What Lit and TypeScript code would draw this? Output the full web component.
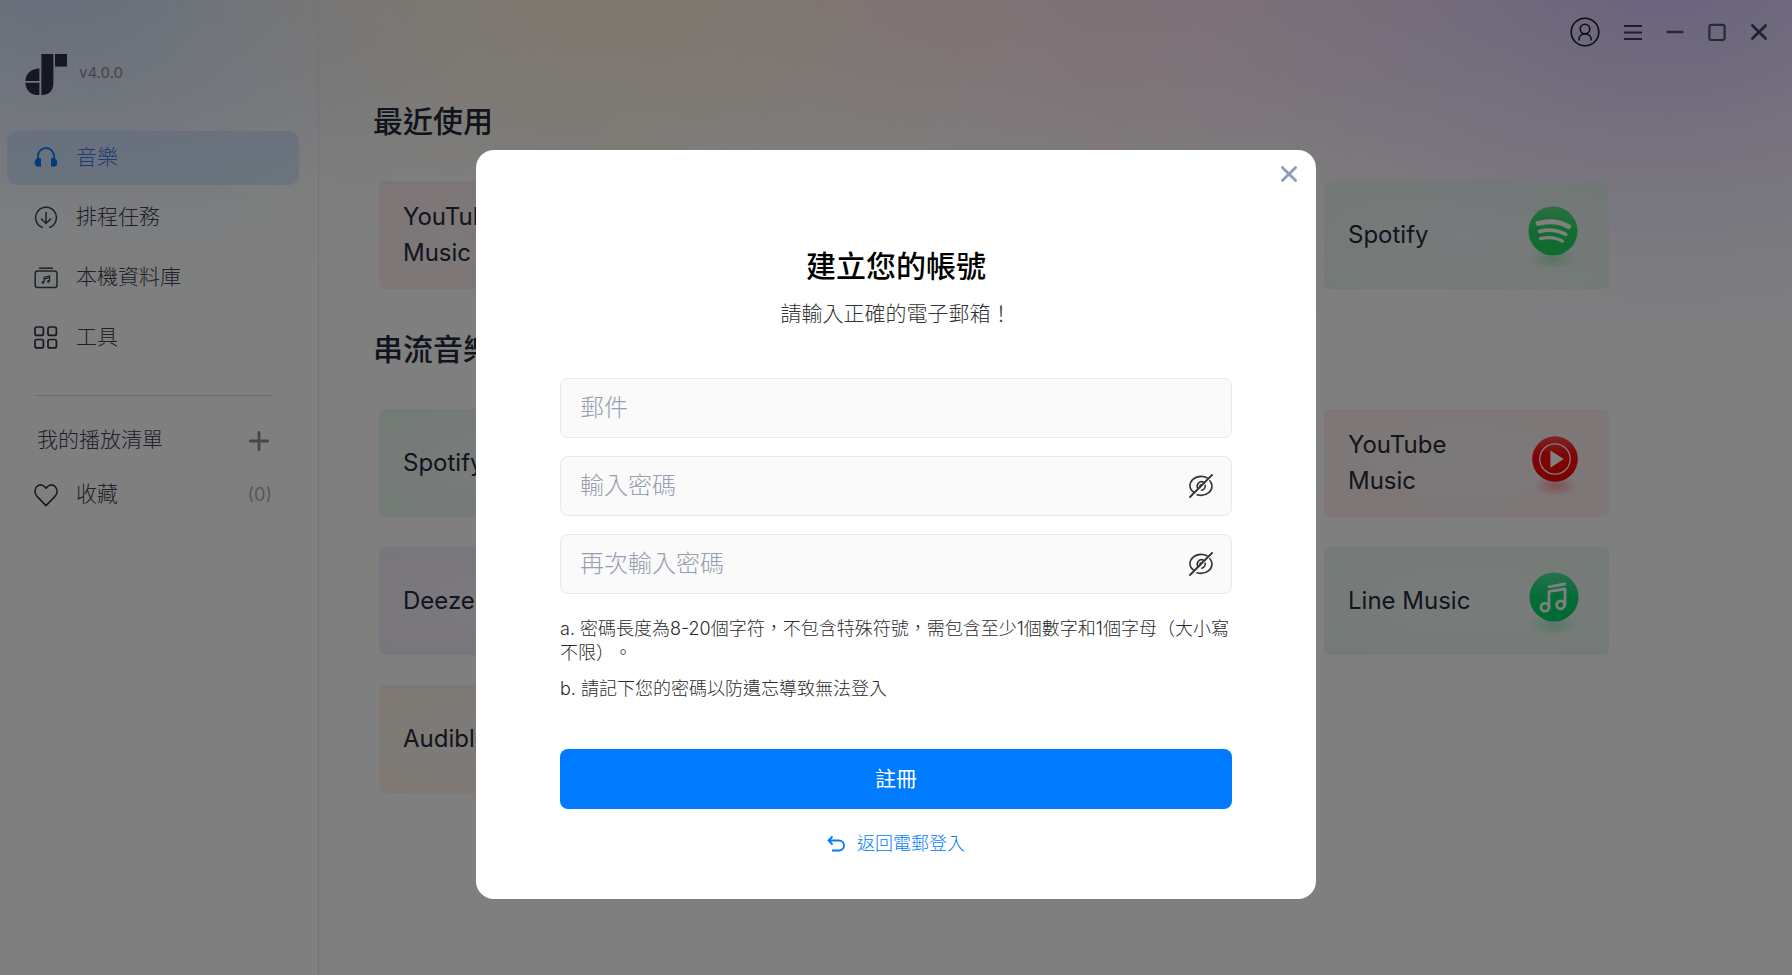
import { LitElement, html, css, nothing, type TemplateResult } from "lit";
import { customElement, property, state } from "lit/decorators.js";
import { classMap } from "lit/directives/class-map.js";

const icons = {
  logo: html`<svg width="42" height="41" viewBox="0 0 42 41" fill="#2a3040" aria-hidden="true">
    <path d="M16.4 0H28.4V29C28.4 36.5 24.4 41 16.4 41Z" />
    <path d="M30 0H42V12.6H30Z" />
    <path d="M14.4 14.6V27H0.3C0.8 19.6 6.2 14.6 14.4 14.6Z" />
    <path d="M14.4 28.8V41H12C5.4 41 0.9 36 0.3 28.8Z" />
  </svg>`,
  music: html`<svg width="24" height="24" viewBox="0 0 24 24" fill="none" aria-hidden="true">
    <path d="M4 14V10a8 8 0 0 1 16 0V14" stroke="#007bff" stroke-width="1.8" />
    <path d="M7 12H4.600A4.500 4.500 0 0 0 4 20.800H7ZM17 12h2.400a4.500 4.500 0 0 1 .6 8.800H17Z" fill="#007bff" />
  </svg>`,
  schedule: html`<svg width="24" height="24" viewBox="0 0 24 24" fill="none" stroke="#3a4252" stroke-width="1.5" aria-hidden="true">
    <path d="M9 21.600A10.400 10.400 0 1 1 15 21.600" />
    <path d="M12 6V17.500M7 12.500l5 5 5-5" />
  </svg>`,
  library: html`<svg width="24" height="24" viewBox="0 0 24 24" fill="none" stroke="#3a4252" stroke-width="1.5" aria-hidden="true">
    <rect x="1.2" y="5" width="21.8" height="16.6" rx="2.6" />
    <path d="M5 2.2H19" />
    <path d="M10.2 16V11.2L15.6 10V15M10.4 12.8l5-1.1" stroke-width="1.2" />
    <circle cx="9" cy="16.4" r="1.3" fill="#3a4252" stroke="none" />
    <circle cx="14.4" cy="15.4" r="1.3" fill="#3a4252" stroke="none" />
  </svg>`,
  tools: html`<svg width="24" height="24" viewBox="0 0 24 24" fill="none" stroke="#2c3444" stroke-width="1.7" aria-hidden="true">
    <rect x="1" y="1" width="8.4" height="8.4" rx="2" />
    <rect x="14" y="1" width="8.4" height="8.4" rx="2" />
    <rect x="1" y="13.5" width="8.4" height="8.4" rx="2" />
    <rect x="14" y="13.5" width="8.4" height="8.4" rx="2" />
  </svg>`,
  heart: html`<svg width="24" height="24" viewBox="0 0 24 24" fill="none" stroke="#2c3444" stroke-width="1.6" stroke-linejoin="round" aria-hidden="true">
    <path d="M12 22.6 3.2 13.6C.2 10.5.2 6 2.9 3.5 5.6 1 9.6 1.4 12 5.2 14.4 1.4 18.4 1 21.1 3.5 23.8 6 23.8 10.5 20.8 13.6Z" />
  </svg>`,
  plus: html`<svg width="20" height="20" viewBox="0 0 20 20" stroke="#8c8c8c" stroke-width="2.8" stroke-linecap="round" aria-hidden="true">
    <path d="M10 1.4V18.6M1.4 10H18.6" />
  </svg>`,
  user: html`<svg width="30" height="30" viewBox="0 0 30 30" fill="none" stroke="#161a2a" stroke-width="1.6" aria-hidden="true">
    <circle cx="15" cy="15" r="13.8" />
    <circle cx="15" cy="12" r="4.8" />
    <path d="M8.8 23.6C8.8 19.4 11.4 16.8 15 16.8S21.4 19.4 21.4 23.6" />
  </svg>`,
  menu: html`<svg width="18" height="16" viewBox="0 0 18 16" stroke="#3c3c52" stroke-width="2" aria-hidden="true">
    <path d="M0 2H18M0 8.5H18M0 15H18" />
  </svg>`,
  minimize: html`<svg width="18" height="18" viewBox="0 0 18 18" stroke="#4a546c" stroke-width="2.4" stroke-linecap="round" aria-hidden="true">
    <path d="M1.5 9H16.5" />
  </svg>`,
  maximize: html`<svg width="18" height="18" viewBox="0 0 18 18" fill="none" stroke="#4a546c" stroke-width="2.2" aria-hidden="true">
    <rect x="1.4" y="1.8" width="15.2" height="15.2" rx="2" />
  </svg>`,
  close: html`<svg width="18" height="18" viewBox="0 0 18 18" fill="none" stroke="currentColor" stroke-width="2.8" stroke-linecap="round" aria-hidden="true">
    <path d="M2.4 2.4 15.6 15.6M15.6 2.4 2.4 15.6" />
  </svg>`,
  eyeOff: html`<svg width="24" height="24" viewBox="0 0 24 24" fill="none" stroke="#333" stroke-width="1.6" stroke-linecap="round" aria-hidden="true">
    <path d="M4.8 18.2C2.4 16.6 1 14.4 1 12 1 6.6 5.8 2.4 12 2.4c2.400 0 4.400.5 6 1.400" />
    <path d="M20.800 6.800C22.200 8.200 23 10 23 12c0 5.200-4.900 9.400-11 9.400-1.400 0-2.700-.2-3.900-.6" />
    <path d="M9 14.600A4.400 4.400 0 0 1 14.600 8.200M16.200 11.200A4.400 4.400 0 0 1 12.800 16.200" />
    <path d="M11 13a1.600 1.600 0 0 1 1.600-2.200" />
    <path d="M1 23 23 1" stroke-width="1.8" />
  </svg>`,
  back: html`<svg width="18" height="18" viewBox="0 0 18 18" fill="none" stroke="#007bff" stroke-width="1.8" aria-hidden="true">
    <path d="M5.5 1.5 1.5 5.5 5.5 9.5M1.5 5.5H12A5 5 0 0 1 12 15.5H5" />
  </svg>`,
};

type Brand = "youtube" | "spotify" | "line" | "deezer" | "audible";

const brandIcon = (brand: Brand): TemplateResult | typeof nothing => {
  if (brand === "spotify") {
    return html`<svg width="56" height="64" viewBox="0 0 56 64" aria-hidden="true">
      <defs>
        <linearGradient id="sp" x1="0" y1="0" x2="0" y2="1">
          <stop offset="0" stop-color="#55dc86" /><stop offset="0.5" stop-color="#25d95f" /><stop offset="1" stop-color="#22d65b" />
        </linearGradient>
        <radialGradient id="sps"><stop offset="0" stop-color="#22d65b" stop-opacity=".3" /><stop offset="1" stop-color="#22d65b" stop-opacity="0" /></radialGradient>
      </defs>
      <ellipse cx="28" cy="56" rx="25" ry="12" fill="url(#sps)" />
      <circle cx="28" cy="28" r="24.5" fill="url(#sp)" />
      <g fill="none" stroke="#fff" stroke-linecap="round">
        <path d="M13.2 20.4C24 17.6 35 18.8 43.6 23.6" stroke-width="5" />
        <path d="M14.6 28.4C24 26 33 27.2 40.6 31.4" stroke-width="3.8" />
        <path d="M15.6 35.6C23 34 30.8 34.6 37.4 38.2" stroke-width="3.2" />
      </g>
    </svg>`;
  }
  if (brand === "youtube") {
    return html`<svg width="56" height="64" viewBox="0 0 56 64" aria-hidden="true">
      <defs>
        <linearGradient id="yt" x1="0" y1="0" x2="0" y2="1">
          <stop offset="0" stop-color="#ff4a4a" /><stop offset="0.4" stop-color="#ff0a0a" /><stop offset="1" stop-color="#f60000" />
        </linearGradient>
        <radialGradient id="yts"><stop offset="0" stop-color="#f00" stop-opacity=".3" /><stop offset="1" stop-color="#f00" stop-opacity="0" /></radialGradient>
      </defs>
      <ellipse cx="30" cy="55" rx="22" ry="11" fill="url(#yts)" />
      <circle cx="30" cy="28" r="22.8" fill="url(#yt)" />
      <circle cx="30" cy="28" r="15.2" fill="none" stroke="#fff" stroke-width="1.3" />
      <path d="M25.4 19.4 38.8 28 25.4 36.8Z" fill="#fff" />
    </svg>`;
  }
  if (brand === "line") {
    return html`<svg width="56" height="64" viewBox="0 0 56 64" aria-hidden="true">
      <defs>
        <linearGradient id="ln" x1="0" y1="0" x2="0" y2="1">
          <stop offset="0" stop-color="#50e3a0" /><stop offset="0.5" stop-color="#08d970" /><stop offset="1" stop-color="#00d468" />
        </linearGradient>
        <radialGradient id="lns"><stop offset="0" stop-color="#00d468" stop-opacity=".25" /><stop offset="1" stop-color="#00d468" stop-opacity="0" /></radialGradient>
      </defs>
      <ellipse cx="29" cy="56" rx="25" ry="12" fill="url(#lns)" />
      <circle cx="29" cy="28" r="24.5" fill="url(#ln)" />
      <g fill="none" stroke="#fff" stroke-width="2.8" stroke-linecap="round" stroke-linejoin="round">
        <path d="M24 38V22.4L40 20V36" />
        <path d="M24 17.8 39.8 15" />
        <circle cx="20" cy="38.2" r="4" />
        <circle cx="35.6" cy="35.8" r="4" />
      </g>
    </svg>`;
  }
  return nothing;
};

interface Service {
  name: string;
  brand: Brand;
  tint: string;
  last?: boolean;
}

const recent: Service[] = [
  { name: "YouTube Music", brand: "youtube", tint: "red" },
  { name: "Spotify", brand: "spotify", tint: "green", last: true },
];

const streaming: Service[] = [
  { name: "Spotify", brand: "spotify", tint: "green" },
  { name: "YouTube Music", brand: "youtube", tint: "red", last: true },
  { name: "Deezer", brand: "deezer", tint: "purple" },
  { name: "Line Music", brand: "line", tint: "green", last: true },
  { name: "Audible", brand: "audible", tint: "amber" },
];

const base = css`
  * {
    box-sizing: border-box;
  }
  button,
  input {
    font: inherit;
    color: inherit;
    border: 0;
    background: none;
    padding: 0;
    margin: 0;
  }
  button {
    cursor: pointer;
  }
  a {
    color: inherit;
    text-decoration: none;
  }
  h1,
  h2,
  p {
    margin: 0;
  }
  svg {
    display: block;
    flex: none;
  }
`;

@customElement("side-bar")
export class SideBar extends LitElement {
  static styles = [
    base,
    css`
      :host {
        display: flex;
        flex-direction: column;
        width: 319px;
        flex: none;
        border-right: 1px solid #e4e4e6;
        font-size: 21px;
        font-weight: 300;
        line-height: 30px;
        color: #3a4252;
      }
      .brand {
        display: flex;
        align-items: flex-start;
        gap: 12px;
        padding: 54px 25px 36px;
      }
      .version {
        font-size: 15px;
        font-weight: 400;
        line-height: 38px;
        height: 41px;
        color: #868a96;
      }
      .nav {
        display: flex;
        flex-direction: column;
        gap: 6px;
        padding: 0 19px 0 7px;
      }
      .item {
        display: flex;
        align-items: center;
        gap: 18px;
        height: 54px;
        padding: 0 27px;
        border-radius: 10px;
      }
      .label {
        padding-bottom: 2px;
      }
      .active {
        background: rgba(182, 214, 250, 0.5);
        color: #3f76ee;
      }
      .rule {
        height: 1px;
        margin: 30px 46px 0 34px;
        background: #dcdcde;
      }
      .heading {
        display: flex;
        align-items: center;
        justify-content: space-between;
        padding: 29px 49px 0 37px;
      }
      .favourites {
        display: flex;
        align-items: center;
        gap: 18px;
        padding: 22px 46px 0 34px;
      }
      .count {
        margin-left: auto;
        font-size: 18px;
        font-weight: 400;
        color: #b0b0b4;
      }
    `,
  ];

  @state() private current = "音樂";

  private items = [
    { label: "音樂", icon: icons.music },
    { label: "排程任務", icon: icons.schedule },
    { label: "本機資料庫", icon: icons.library },
    { label: "工具", icon: icons.tools },
  ];

  render() {
    return html`
      <div class="brand">${icons.logo}<span class="version">v4.0.0</span></div>
      <nav class="nav">
        ${this.items.map(
          (item) => html`<a
            href="#"
            class=${classMap({ item: true, active: item.label === this.current })}
            @click=${() => (this.current = item.label)}
            >${item.icon}<span class="label">${item.label}</span></a
          >`
        )}
      </nav>
      <div class="rule"></div>
      <div class="heading">
        <span class="label">我的播放清單</span>
        <button aria-label="+">${icons.plus}</button>
      </div>
      <a class="favourites" href="#">${icons.heart}<span class="label">收藏</span><span class="count">(0)</span></a>
    `;
  }
}

@customElement("service-grid")
export class ServiceGrid extends LitElement {
  static styles = [
    base,
    css`
      :host {
        display: block;
      }
      .title {
        font-size: 30px;
        font-weight: 500;
        line-height: 44px;
        color: #222838;
      }
      .grid {
        display: grid;
        grid-template-columns: repeat(auto-fill, 285px);
        gap: 30px;
        padding: 38px 6px 0;
      }
      .card {
        display: flex;
        align-items: center;
        justify-content: space-between;
        height: 108px;
        padding: 0 28px 0 24px;
        border-radius: 6px;
        font-size: 24px;
        line-height: 36px;
        text-align: left;
        color: #242a3c;
      }
      .last {
        grid-column: -2;
      }
      .name {
        max-width: 140px;
      }
      .red {
        background: radial-gradient(ellipse at 50% 50%, rgba(242, 236, 240, 0.6), rgba(255, 216, 218, 0.5));
      }
      .green {
        background: radial-gradient(ellipse at 50% 50%, rgba(234, 242, 242, 0.6), rgba(216, 240, 224, 0.6));
      }
      .purple {
        background: radial-gradient(ellipse at 50% 50%, rgba(248, 240, 246, 0.6), rgba(230, 222, 246, 0.6));
      }
      .amber {
        background: radial-gradient(ellipse at 50% 50%, rgba(248, 242, 240, 0.6), rgba(250, 232, 212, 0.6));
      }
    `,
  ];

  @property() heading = "";
  @property({ attribute: false }) services: Service[] = [];

  render() {
    return html`
      <h2 class="title">${this.heading}</h2>
      <div class="grid">
        ${this.services.map(
          (s) => html`<button class=${classMap({ card: true, [s.tint]: true, last: !!s.last })}>
            <span class="name">${s.name}</span>${brandIcon(s.brand)}
          </button>`
        )}
      </div>
    `;
  }
}

@customElement("sign-up-dialog")
export class SignUpDialog extends LitElement {
  static styles = [
    base,
    css`
      :host {
        display: block;
        position: relative;
        width: 840px;
        max-width: 100%;
        padding: 94px 84px 40px;
        border-radius: 18px;
        background: #fff;
        color: #333;
      }
      .close {
        position: absolute;
        top: 15px;
        right: 18px;
        color: #8f9bbb;
      }
      .title {
        font-size: 30px;
        font-weight: 500;
        line-height: 44px;
        text-align: center;
        color: #000;
      }
      .subtitle {
        margin-top: 11px;
        font-size: 21px;
        font-weight: 300;
        line-height: 30px;
        text-align: center;
      }
      .form {
        display: flex;
        flex-direction: column;
        gap: 18px;
        margin-top: 49px;
      }
      .field {
        display: flex;
        align-items: center;
        height: 60px;
        padding: 0 18px 0 19px;
        border: 1px solid #e8e8e8;
        border-radius: 8px;
        background: #fafafa;
      }
      .input {
        flex: 1;
        min-width: 0;
        height: 36px;
        outline: 0;
        font-size: 24px;
        font-weight: 300;
        line-height: 36px;
      }
      .input::placeholder {
        color: #969eb0;
        opacity: 1;
      }
      .rules {
        display: flex;
        flex-direction: column;
        gap: 12px;
        padding: 5px 0 30px;
        font-size: 18px;
        font-weight: 300;
        line-height: 24px;
        color: #2a2a2a;
        text-spacing-trim: space-all;
      }
      .submit {
        height: 60px;
        border-radius: 8px;
        background: #007bff;
        color: #fff;
        font-size: 21px;
        font-weight: 400;
        line-height: 30px;
      }
      .back {
        display: flex;
        align-items: center;
        justify-content: center;
        gap: 12px;
        margin-top: 20px;
        font-size: 18px;
        font-weight: 300;
        line-height: 30px;
        color: #007bff;
      }
    `,
  ];

  private passwordField(label: string) {
    return html`<div class="field">
      <input class="input" type="password" placeholder=${label} aria-label=${label} />
      <button type="button" aria-label=${label}>${icons.eyeOff}</button>
    </div>`;
  }

  render() {
    return html`
      <button class="close" aria-label="×">${icons.close}</button>
      <h1 class="title">建立您的帳號</h1>
      <p class="subtitle">請輸入正確的電子郵箱！</p>
      <form class="form" @submit=${(e: Event) => e.preventDefault()}>
        <div class="field">
          <input class="input" type="email" placeholder="郵件" aria-label="郵件" />
        </div>
        ${this.passwordField("輸入密碼")} ${this.passwordField("再次輸入密碼")}
        <div class="rules">
          <p>a. 密碼長度為8-20個字符，不包含特殊符號，需包含至少1個數字和1個字母（大小寫不限）。</p>
          <p>b. 請記下您的密碼以防遺忘導致無法登入</p>
        </div>
        <button class="submit">註冊</button>
      </form>
      <a class="back" href="#">${icons.back}<span>返回電郵登入</span></a>
    `;
  }
}

@customElement("app-root")
export class AppRoot extends LitElement {
  static styles = [
    base,
    css`
      :host {
        display: block;
        font-family: Inter, "Noto Sans CJK TC", sans-serif;
      }
      .app {
        position: relative;
      }
      .page {
        display: flex;
        min-height: 100vh;
        background:
          radial-gradient(ellipse 680px 440px at 93% -3%, rgba(184, 158, 250, 0.62), rgba(210, 192, 250, 0.42) 40%, rgba(232, 224, 252, 0.2) 70%, transparent),
          radial-gradient(ellipse 600px 320px at 64% -3%, rgba(255, 196, 214, 0.56), rgba(255, 208, 222, 0.4) 40%, rgba(255, 232, 238, 0.16) 70%, transparent),
          radial-gradient(ellipse 600px 320px at 35% -3%, rgba(252, 230, 200, 0.72), rgba(252, 236, 214, 0.5) 45%, rgba(254, 246, 236, 0.2) 72%, transparent),
          radial-gradient(ellipse 600px 350px at 5% -3%, rgba(184, 208, 244, 0.76), rgba(204, 220, 248, 0.55) 40%, rgba(232, 240, 252, 0.24) 70%, transparent),
          #fff;
      }
      .main {
        flex: 1;
        min-width: 0;
      }
      .bar {
        display: flex;
        justify-content: flex-end;
        align-items: center;
        gap: 18px;
        height: 63px;
        padding: 0 21px;
        color: #3e4860;
      }
      .tool {
        display: flex;
        justify-content: center;
        width: 24px;
      }
      .wide {
        width: 36px;
      }
      .content {
        display: flex;
        flex-direction: column;
        gap: 38px;
        padding: 36px 54px 60px;
      }
      .shade {
        position: absolute;
        inset: 0;
        display: flex;
        justify-content: center;
        align-items: flex-start;
        padding-top: 150px;
        background: rgba(0, 0, 0, 0.5);
      }
    `,
  ];

  render() {
    return html`
      <div class="app" lang="zh-TW">
        <div class="page">
          <side-bar></side-bar>
          <main class="main">
            <header class="bar">
              <button class="tool wide" aria-label="user">${icons.user}</button>
              <button class="tool" aria-label="menu">${icons.menu}</button>
              <button class="tool" aria-label="minimize">${icons.minimize}</button>
              <button class="tool" aria-label="maximize">${icons.maximize}</button>
              <button class="tool" aria-label="close">${icons.close}</button>
            </header>
            <div class="content">
              <service-grid heading="最近使用" .services=${recent}></service-grid>
              <service-grid heading="串流音樂" .services=${streaming}></service-grid>
            </div>
          </main>
        </div>
        <div class="shade"><sign-up-dialog role="dialog"></sign-up-dialog></div>
      </div>
    `;
  }
}
